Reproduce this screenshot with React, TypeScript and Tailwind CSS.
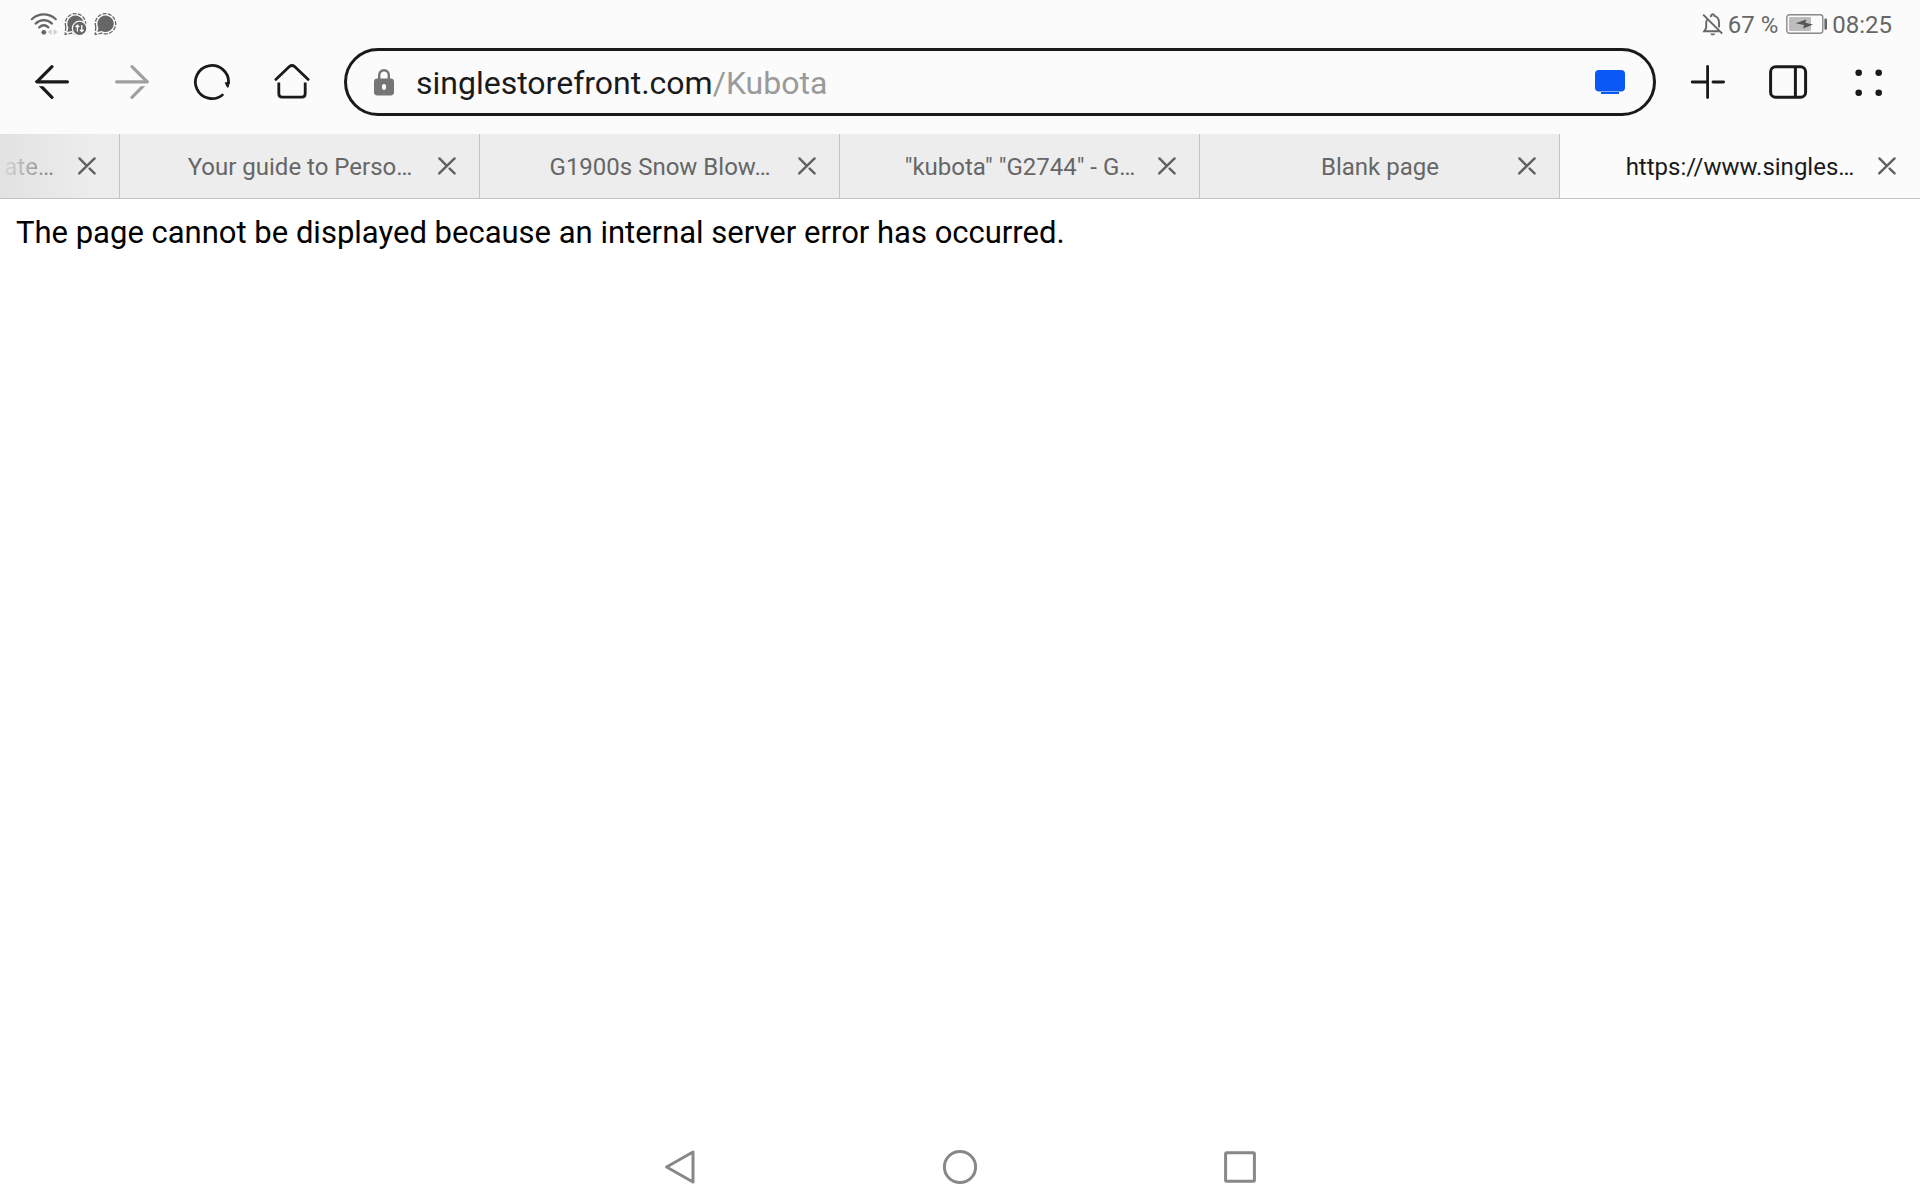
import React from 'react'

const tabs = [
  { title: 'Your guide to Perso…', active: false },
  { title: 'G1900s Snow Blow…', active: false },
  { title: '"kubota" "G2744" - G…', active: false },
  { title: 'Blank page', active: false },
  { title: 'https://www.singles…', active: true },
]

const WifiIcon = () => (
  <svg width="28" height="24" viewBox="0 0 28 24" fill="none" stroke="#666666" strokeWidth="2.2" strokeLinecap="round">
    <path d="M1.8 7.2C8.8 0.8 18.8 0.8 25.8 7.2" />
    <path d="M5.6 11.6C10.6 7 17 7 22 11.6" />
    <path d="M9.2 15.4C12 12.8 15.6 12.8 18.4 15.4" />
    <circle cx="13.8" cy="20.3" r="2.4" fill="#666666" stroke="none" />
    <path d="M21.6 17v6l-4-3zM23.6 17v6l4-3z" fill="#cfcfcf" stroke="none" />
  </svg>
)

const ChatBubble = () => (
  <>
    <path
      d="M1.8 15A10.2 10.2 0 1 1 7.6 21.2L1.2 22.4Z"
      stroke="#666666"
      strokeWidth="1.3"
      strokeDasharray="4 1.4"
      fill="none"
    />
    <path d="M11.4 3.6a8.2 8.2 0 1 1-3.8 15.4L3.4 20l1-4.2A8.2 8.2 0 0 1 11.4 3.6z" fill="#666666" />
  </>
)

const ChatSyncIcon = () => (
  <svg width="24" height="24" viewBox="0 0 24 24">
    <ChatBubble />
    <circle cx="15.6" cy="16.4" r="7.8" fill="#fbfbfb" />
    <circle cx="15.6" cy="16.4" r="6.6" fill="#666666" />
    <path
      d="M13.4 19.6v-6.2M11.6 15l1.8-1.8 1.8 1.8M17.8 13v6.2M16 17.8l1.8 1.8 1.8-1.8"
      stroke="#fbfbfb"
      strokeWidth="1.3"
      fill="none"
    />
  </svg>
)

const ChatIcon = () => (
  <svg width="24" height="24" viewBox="0 0 24 24">
    <ChatBubble />
  </svg>
)

const BellOffIcon = () => (
  <svg width="22" height="24" viewBox="0 0 22 24" fill="none" stroke="#666666" strokeWidth="1.9">
    <path d="M5 7.6C4.3 9 4.2 10 4.2 11.4V16L2.2 19.2H17.2" />
    <path d="M8 4.6C8.6 4.2 9 4 9.4 3.8C9.4 1.6 12.2 1.6 12.4 3.8C15.4 4.6 17 7.4 17 10.6V15.4" />
    <path d="M1.2 2.6L20.2 21.6" />
    <path d="M8.2 21.4h5.2l-1.4 1.8h-2.4z" fill="#666666" stroke="none" />
  </svg>
)

const BatteryIcon = () => (
  <svg width="42" height="24" viewBox="0 0 42 24">
    <rect x="0.8" y="2.8" width="36" height="18.4" rx="2.6" fill="none" stroke="#8a8a8a" strokeWidth="1.4" />
    <rect x="3" y="5" width="22" height="14" rx="1" fill="#bdbdbd" />
    <rect x="38.4" y="6.4" width="2.6" height="11.4" rx="1" fill="#666666" />
    <path d="M9.6 11.2L20.4 7.6L19.4 10.8L27 12.4L17.2 16.4L18 13Z" fill="#555555" />
  </svg>
)

const BackIcon = ({ color }: { color: string }) => (
  <svg width="40" height="40" viewBox="0 0 40 40" fill="none" stroke={color} strokeWidth="3.2" strokeLinecap="round" strokeLinejoin="round">
    <path d="M20 4.6L4.8 19.8L20 35.4" />
    <rect x="2" y="20" width="20" height="4.2" fill="#fbfbfb" stroke="none" />
    <path d="M4.8 19.8H35.4" />
  </svg>
)

const ReloadIcon = () => (
  <svg width="40" height="40" viewBox="0 0 40 40" fill="none" stroke="#1a1a1a" strokeWidth="2.8" strokeLinecap="round">
    <path d="M30.4 33A16.6 16.6 0 1 1 36.6 20.6" />
    <path d="M32.6 20.4L38 19.6L36.8 24.8Q36 26.4 34.8 25Z" fill="#1a1a1a" stroke="none" />
  </svg>
)

const HomeIcon = () => (
  <svg width="40" height="40" viewBox="0 0 40 40" fill="none" stroke="#1a1a1a" strokeWidth="2.8" strokeLinecap="round">
    <path d="M3.8 17.4L17.4 4.6Q20 2.4 22.6 4.6L36.2 17.4" />
    <path d="M6.8 20.4V31.6Q6.8 35.2 10.2 35.2H29.8Q33.2 35.2 33.2 31.6V20.4" strokeLinecap="butt" />
  </svg>
)

const PlusIcon = () => (
  <svg width="40" height="40" viewBox="0 0 40 40" fill="none" stroke="#1a1a1a" strokeWidth="2.8" strokeLinecap="round">
    <path d="M19.6 4.4V35.6" />
    <path d="M4.2 20H19.6" />
    <path d="M25 20H35.6" />
  </svg>
)

const PanelIcon = () => (
  <svg width="40" height="40" viewBox="0 0 40 40" fill="none" stroke="#1a1a1a" strokeWidth="3">
    <rect x="2.6" y="4.8" width="35" height="30.4" rx="5" />
    <path d="M27.4 4.8V35.2" />
  </svg>
)

const DotsIcon = () => (
  <svg width="40" height="40" viewBox="0 0 40 40" fill="#1a1a1a">
    <circle cx="10.7" cy="10.7" r="3.3" />
    <circle cx="30.7" cy="10.7" r="3.3" />
    <circle cx="10.7" cy="30.7" r="3.3" />
    <circle cx="30.7" cy="30.7" r="3.3" />
  </svg>
)

const LockIcon = () => (
  <svg className="shrink-0" width="20" height="28" viewBox="0 0 20 28">
    <path d="M5.2 12V7a4.8 4.8 0 0 1 9.6 0v5" fill="none" stroke="#757575" strokeWidth="2.4" />
    <rect x="0" y="10.4" width="20" height="17" rx="3.4" fill="#757575" />
    <ellipse cx="10" cy="19" rx="2.1" ry="3" fill="#fbfbfb" />
  </svg>
)

const ScreenIcon = () => (
  <svg width="30" height="24" viewBox="0 0 30 24" fill="#0a58f5">
    <rect x="0" y="0" width="30" height="21.4" rx="4" />
    <rect x="6" y="22" width="18" height="2" />
  </svg>
)

const CloseIcon = () => (
  <svg width="20" height="20" viewBox="0 0 20 20" fill="none" stroke="#606060" strokeWidth="2.4" strokeLinecap="round">
    <path d="M17.6 2.4L2.2 17.4" />
    <path d="M2.4 2.4L9.6 9.6" />
    <path d="M12.6 12.6L17.6 17.4" />
  </svg>
)

const toolButton = 'flex w-20 h-17 items-center justify-center'

const App = () => {
  return (
    <div className="flex min-h-screen flex-col bg-white font-[Roboto,sans-serif]">
      <header className="bg-[#fbfbfb]">
        <div className="flex h-12 items-center justify-between pl-[30px] pr-7 text-2xl text-[#666666]">
          <div className="flex items-center gap-1.5">
            <WifiIcon />
            <ChatSyncIcon />
            <ChatIcon />
          </div>
          <div className="flex items-center gap-1">
            <BellOffIcon />
            <span className="pt-0.5 pr-1">67 %</span>
            <BatteryIcon />
            <span className="pt-0.5">08:25</span>
          </div>
        </div>

        <div className="flex items-center gap-3 px-3 pb-[18px]">
          <div className="flex">
            <button aria-label="Back" className={toolButton}>
              <BackIcon color="#1a1a1a" />
            </button>
            <button aria-label="Forward" className={`${toolButton} -scale-x-100`}>
              <BackIcon color="#a0a0a0" />
            </button>
            <button aria-label="Reload" className={toolButton}>
              <ReloadIcon />
            </button>
            <button aria-label="Home" className={toolButton}>
              <HomeIcon />
            </button>
          </div>

          <div className="flex h-17 min-w-0 flex-1 items-center rounded-full border-3 border-[#1a1a1a] pl-[27px] pr-7">
            <LockIcon />
            <label className="ml-[22px] flex flex-1 items-center pt-0.5 text-[32px] leading-10">
              <input
                aria-label="Address"
                defaultValue="singlestorefront.com"
                className="field-sizing-content text-[#1a1a1a] outline-none"
              />
              <span className="text-[#9a9a9a]">/Kubota</span>
            </label>
            <button aria-label="Desktop site">
              <ScreenIcon />
            </button>
          </div>

          <div className="flex">
            <button aria-label="New tab" className={toolButton}>
              <PlusIcon />
            </button>
            <button aria-label="Side panel" className={toolButton}>
              <PanelIcon />
            </button>
            <button aria-label="Menu" className={toolButton}>
              <DotsIcon />
            </button>
          </div>
        </div>

        <nav className="grid h-[65px] grid-cols-16 border-b border-[#c4c4c4] text-2xl text-[#666666]">
          {/* scrolled half out of view, so it fades towards the edge */}
          <div className="flex min-w-0 items-center justify-end gap-[23px] overflow-hidden border-r border-[#c4c4c4] bg-linear-to-r from-[#e2e2e2] to-[#ededed] to-80% pr-[22px]">
            <button className="bg-linear-to-r from-[#d8d8d8] to-[#808080] bg-clip-text pt-0.5 text-transparent">
              ate…
            </button>
            <button aria-label="Close tab">
              <CloseIcon />
            </button>
          </div>
          {tabs.map((tab) => (
            <div
              key={tab.title}
              className={
                tab.active
                  ? 'col-span-3 flex min-w-0 items-center bg-[#fbfbfb] pl-16 pr-[23px] text-[#1a1a1a]'
                  : 'col-span-3 flex min-w-0 items-center border-r border-[#c4c4c4] bg-[#ededed] pl-16 pr-[22px]'
              }
            >
              <button className="min-w-0 flex-1 truncate pt-0.5">{tab.title}</button>
              <button aria-label="Close tab" className="ml-[21px]">
                <CloseIcon />
              </button>
            </div>
          ))}
        </nav>
      </header>

      <main className="flex-1 px-4 py-3.5">
        <p className="text-[31px] leading-10 text-black">
          The page cannot be displayed because an internal server error has occurred.
        </p>
      </main>

      <footer className="flex h-[66px] justify-center">
        <button aria-label="System back" className="flex w-70 items-center justify-center">
          <svg width="36" height="36" viewBox="0 0 36 36" fill="none" stroke="#888888" strokeWidth="3" strokeLinejoin="round">
            <path d="M31 3V33L4.6 18Z" />
          </svg>
        </button>
        <button aria-label="System home" className="flex w-70 items-center justify-center">
          <svg width="36" height="36" viewBox="0 0 36 36" fill="none" stroke="#888888" strokeWidth="3">
            <circle cx="18" cy="18" r="15.6" />
          </svg>
        </button>
        <button aria-label="Recent apps" className="flex w-70 items-center justify-center">
          <svg width="36" height="36" viewBox="0 0 36 36" fill="none" stroke="#888888" strokeWidth="3">
            <rect x="3.6" y="3.8" width="28.8" height="28.4" rx="1" />
          </svg>
        </button>
      </footer>
    </div>
  )
}

export default App
